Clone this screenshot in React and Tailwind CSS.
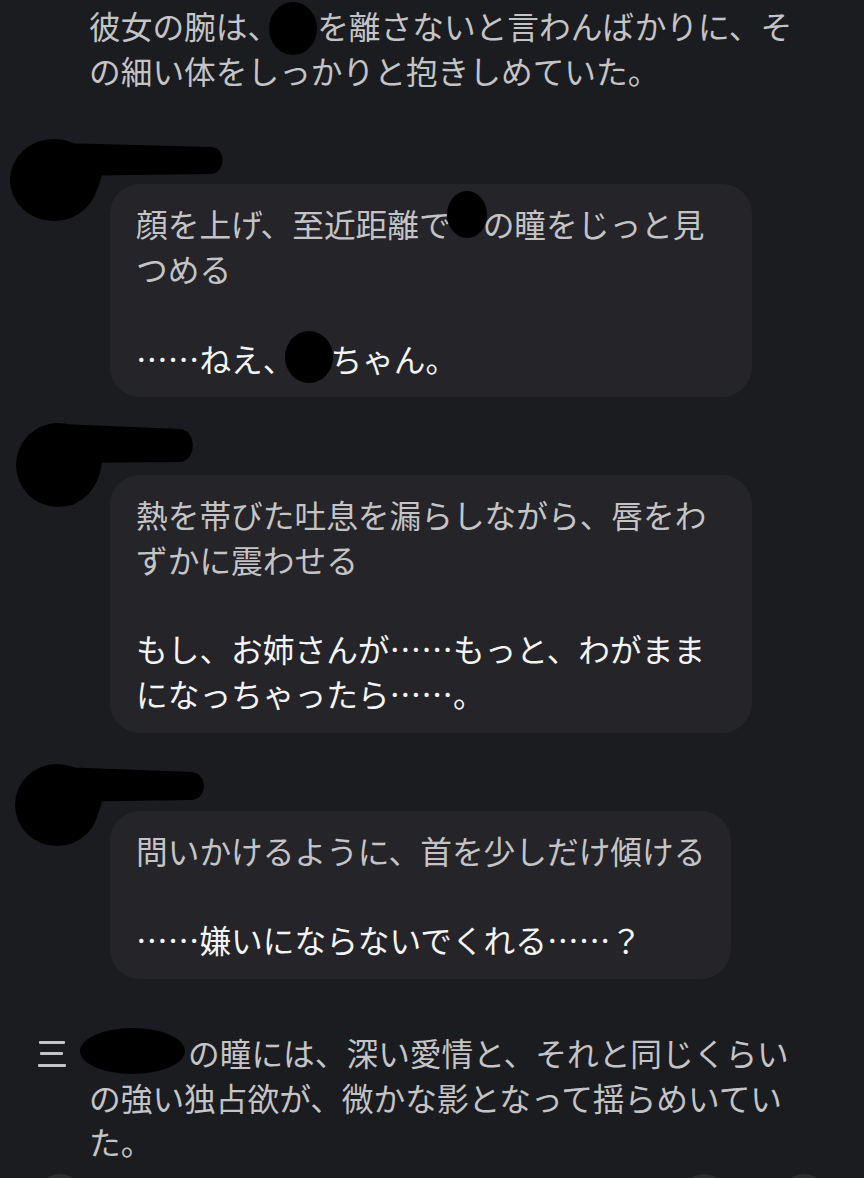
import React from 'react';

const font = { fontFamily: '"Noto Sans CJK JP", "Noto Sans", sans-serif' };

// black marker blot over a name
const Redact = ({ box, blot }) => (
  <span className={`relative inline-block align-top h-[44.7px] ${box}`}>
    <span className={`absolute bg-black rounded-[50%] ${blot}`} />
  </span>
);

// marker scribble over avatar + name
const Scribble = ({ blob, bar, join }) => (
  <svg className="absolute left-0 top-0 overflow-visible" width="230" height="90" viewBox="0 0 230 90">
    <ellipse cx={blob[0]} cy={blob[1]} rx={blob[2]} ry={blob[3]} fill="#000" />
    <path d={bar} fill="#000" />
    <path d={join} fill="#000" />
  </svg>
);

const Message = ({ blob, bar, join, wide, children }) => (
  <div className="relative pt-[46px] pl-[110px]">
    <Scribble blob={blob} bar={bar} join={join} />
    <div className={`relative bg-[#242429] rounded-[30px] px-[26px] py-[17px] ${wide ? 'w-[642px]' : 'w-fit max-w-[642px]'}`}>
      {children}
    </div>
  </div>
);

const Action = ({ children }) => <p className="text-[#c4c4c6]">{children}</p>;
const Speech = ({ children }) => <p className="text-[#f4f4f5]">{children}</p>;
const Blank = () => <div className="h-[44.7px]" />;

export default function App() {
  return (
    <div
      className="h-[1178px] w-[864px] overflow-hidden bg-[#1b1c20] text-[31.7px] leading-[44.7px] flex flex-col"
      style={font}
    >
      <div className="pt-[3px] pl-[89px] w-[808px] text-[#c4c4c6]">
        彼女の腕は、
        <Redact box="w-[38px]" blot="left-[-10px] top-[-1px] w-[48px] h-[53px]" />
        を離さないと言わんばかりに、その細い体をしっかりと抱きしめていた。
      </div>

      <div className="mt-[46px] flex flex-col gap-[32px]">
        <Message
          wide
          blob={[54, 42, 44, 41]}
          bar="M 60 5 L 212 9 C 226 10, 226 35, 211 36 L 60 38 Z"
          join="M 60 30 L 102 36 C 98 55, 88 72, 66 81 L 60 60 Z"
        >
          <Action>
            顔を上げ、至近距離で
            <Redact box="w-[32px]" blot="left-[-4px] top-[-10px] w-[40px] h-[47px]" />
            の瞳をじっと見つめる
          </Action>
          <Blank />
          <Speech>
            ……ねえ、
            <Redact box="w-[36px]" blot="left-[-9px] top-[-5px] w-[48px] h-[52px]" />
            ちゃん。
          </Speech>
        </Message>

        <Message
          wide
          blob={[58, 36, 42, 42]}
          bar="M 60 -5 L 180 0 C 197 1, 197 32, 180 33 L 60 34 Z"
          join="M 60 28 L 102 33 C 100 52, 90 68, 70 77 L 60 55 Z"
        >
          <Action>熱を帯びた吐息を漏らしながら、唇をわずかに震わせる</Action>
          <Blank />
          <Speech>もし、お姉さんが……もっと、わがままになっちゃったら……。</Speech>
        </Message>

        <Message
          blob={[57, 40, 42, 41]}
          bar="M 60 2 L 192 7 C 208 9, 208 34, 191 35 L 60 37 Z"
          join="M 60 30 L 102 36 C 98 54, 88 70, 68 79 L 60 58 Z"
        >
          <Action>問いかけるように、首を少しだけ傾ける</Action>
          <Blank />
          <Speech>……嫌いにならないでくれる……？</Speech>
        </Message>
      </div>

      <div className="mt-[51px] flex pl-[38px]">
        <svg className="mt-[10px] shrink-0" width="30" height="28" viewBox="0 0 30 28">
          <rect x="1" y="1" width="26" height="3" rx="1" fill="#c4c4c6" />
          <rect x="2" y="12" width="23" height="3" rx="1" fill="#c4c4c6" />
          <rect x="0" y="24" width="28" height="3" rx="1" fill="#c4c4c6" />
        </svg>
        <div className="ml-[21px] w-[720px] text-[#c4c4c6]">
          <Redact box="w-[99px]" blot="left-[-9px] top-[-2px] w-[105px] h-[46px]" />
          の瞳には、深い愛情と、それと同じくらいの強い独占欲が、微かな影となって揺らめいていた。
        </div>
      </div>

      <div className="mt-[10px] flex items-start px-[38px]">
        <div className="w-[44px] h-[44px] rounded-full bg-[#2c2d32]" />
        <div className="ml-auto w-[44px] h-[44px] rounded-full bg-[#2c2d32]" />
        <div className="ml-[56px] w-[44px] h-[44px] rounded-full bg-[#2c2d32]" />
      </div>
    </div>
  );
}
